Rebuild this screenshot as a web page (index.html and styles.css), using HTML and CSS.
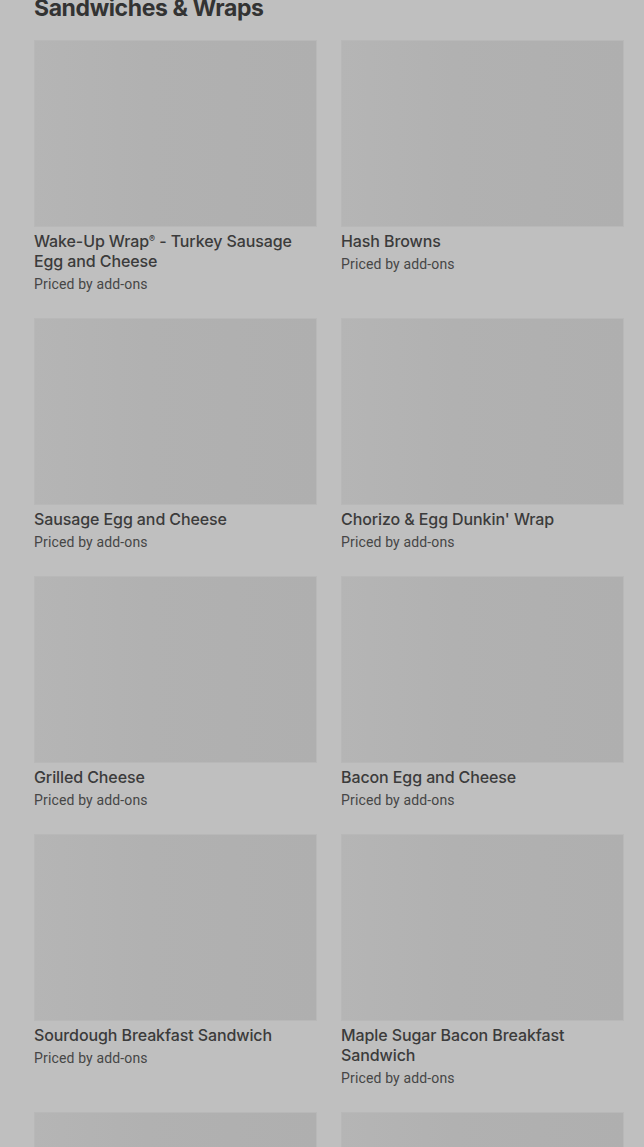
FILE: index.html
```html
<!DOCTYPE html>
<html lang="en">
<head>
    <meta charset="UTF-8">
    <meta name="viewport" content="width=device-width, initial-scale=1.0">
    <title>Sandwiches &amp; Wraps</title>
    <link rel="stylesheet" href="styles.css">
</head>
<body>
    <section class="menu-section">
        <h2 class="section-title">Sandwiches &amp; Wraps</h2>

        <div class="item-grid">
            <div class="item">
                <div class="item-image"></div>
                <div class="item-name">Wake-Up Wrap<span class="reg">®</span> - Turkey Sausage Egg and Cheese</div>
                <div class="item-price">Priced by add-ons</div>
            </div>
            <div class="item">
                <div class="item-image"></div>
                <div class="item-name">Hash Browns</div>
                <div class="item-price">Priced by add-ons</div>
            </div>
            <div class="item">
                <div class="item-image"></div>
                <div class="item-name">Sausage Egg and Cheese</div>
                <div class="item-price">Priced by add-ons</div>
            </div>
            <div class="item">
                <div class="item-image"></div>
                <div class="item-name">Chorizo &amp; Egg Dunkin' Wrap</div>
                <div class="item-price">Priced by add-ons</div>
            </div>
            <div class="item">
                <div class="item-image"></div>
                <div class="item-name">Grilled Cheese</div>
                <div class="item-price">Priced by add-ons</div>
            </div>
            <div class="item">
                <div class="item-image"></div>
                <div class="item-name">Bacon Egg and Cheese</div>
                <div class="item-price">Priced by add-ons</div>
            </div>
            <div class="item">
                <div class="item-image"></div>
                <div class="item-name">Sourdough Breakfast Sandwich</div>
                <div class="item-price">Priced by add-ons</div>
            </div>
            <div class="item">
                <div class="item-image"></div>
                <div class="item-name">Maple Sugar Bacon Breakfast Sandwich</div>
                <div class="item-price">Priced by add-ons</div>
            </div>
            <div class="item">
                <div class="item-image"></div>
            </div>
            <div class="item">
                <div class="item-image"></div>
            </div>
        </div>
    </section>
</body>
</html>
```

FILE: styles.css
```css
html,
body {
    height: 100%;
    overflow: hidden;
}

body {
    margin: 0;
    padding: 0 20px 0 34px;
    background-color: #bfbfbf;
    font-family: Roboto, 'Liberation Sans', sans-serif;
    color: #3b3b3b;
}

.menu-section {
    margin-top: -8px;
}

.section-title {
    margin: 0 0 16px;
    font-family: Inter, 'Liberation Sans', sans-serif;
    font-size: 23px;
    line-height: 32px;
    font-weight: 700;
    letter-spacing: -0.4px;
    color: #333;
}

.item-grid {
    display: grid;
    grid-template-columns: 283px 283px;
    column-gap: 24px;
    row-gap: 24px;
}

.item-image {
    height: 187px;
    background: linear-gradient(90deg, #b5b5b5 0%, #b1b1b1 40%, #afafaf 100%);
    box-shadow: inset 0 0 0 1px #b8b8b8;
}

.item-name {
    margin-top: 4px;
    font-family: Inter, Roboto, sans-serif;
    font-size: 16px;
    line-height: 20px;
    font-weight: 500;
    letter-spacing: -0.1px;
    color: #3b3b3b;
}

.reg {
    font-size: 9px;
    vertical-align: 5px;
    line-height: 0;
}

.item-price {
    margin-top: 3px;
    font-size: 14px;
    line-height: 20px;
    letter-spacing: 0.15px;
    color: #464646;
}
```
